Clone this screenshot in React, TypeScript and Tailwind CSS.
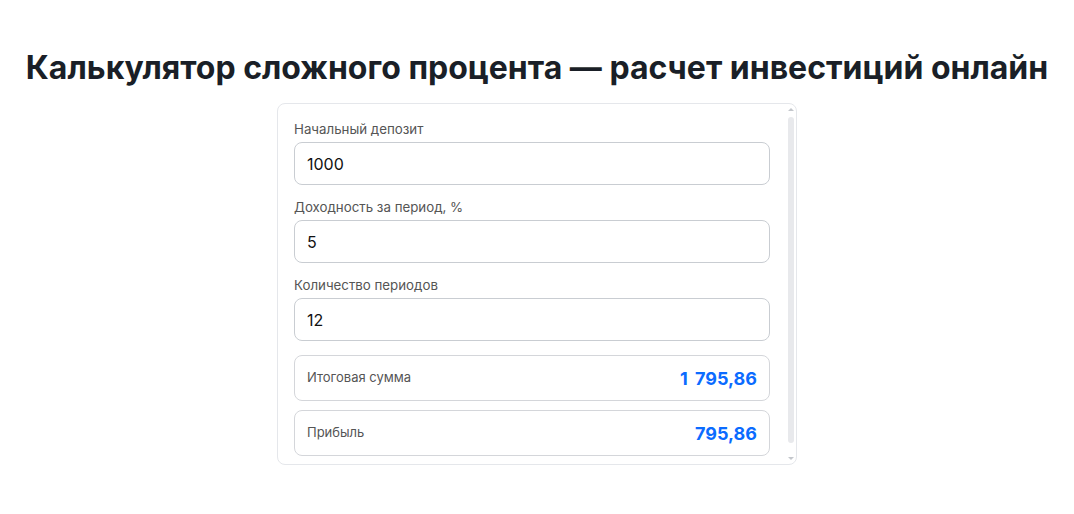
import React from "react";

function Field({ label, value }: { label: string; value: string }) {
  return (
    <div className="flex flex-col">
      <label className="text-[13.3px] leading-[18px] text-[#555] mb-[4px]">{label}</label>
      <input
        readOnly
        value={value}
        className="h-[43px] w-full rounded-lg border border-[#c9cdd2] px-3 text-[16px] text-[#111] outline-none bg-white"
      />
    </div>
  );
}

function Result({ label, value }: { label: string; value: string }) {
  return (
    <div className="flex h-[46px] items-center justify-between rounded-lg border border-[#d4d6da] px-3">
      <span className="text-[13px] text-[#555]">{label}</span>
      <span className="text-[18px] font-bold text-[#0b6bff] whitespace-pre [word-spacing:3px]">{value}</span>
    </div>
  );
}

function ScrollBar() {
  return (
    <div className="flex w-[10px] flex-col items-center">
      <div className="flex h-[10px] items-center justify-center pt-[1px]">
        <div className="h-0 w-0 border-x-[3px] border-b-[3px] border-x-transparent border-b-[#c4c7cc]" />
      </div>
      <div className="mt-[3px] h-[326px] w-[6px] rounded-full bg-[#e8e9ec]" />
      <div className="flex-1" />
      <div className="flex h-[10px] items-center justify-center pb-[1px]">
        <div className="h-0 w-0 border-x-[3px] border-t-[3px] border-x-transparent border-t-[#c4c7cc]" />
      </div>
    </div>
  );
}

export default function App() {
  return (
    <div className="min-h-[514px] bg-white pt-[46px] font-['Inter','Liberation_Sans',sans-serif]">
      <h1 className="text-center text-[32px] font-bold leading-[44px] text-[#1a1f27] mb-[13px]">
        Калькулятор сложного процента — расчет инвестиций онлайн
      </h1>
      <div className="mx-auto flex h-[362px] w-[520px] overflow-hidden rounded-lg border border-[#e5e7eb]">
        <div className="flex flex-1 flex-col px-4 pt-4 pb-2">
          <div className="flex flex-col gap-[13px]">
            <Field label="Начальный депозит" value="1000" />
            <Field label="Доходность за период, %" value="5" />
            <Field label="Количество периодов" value="12" />
          </div>
          <div className="mt-[14px] flex flex-col gap-[9px]">
            <Result label="Итоговая сумма" value="1 795,86" />
            <Result label="Прибыль" value="795,86" />
          </div>
        </div>
        <ScrollBar />
      </div>
    </div>
  );
}
